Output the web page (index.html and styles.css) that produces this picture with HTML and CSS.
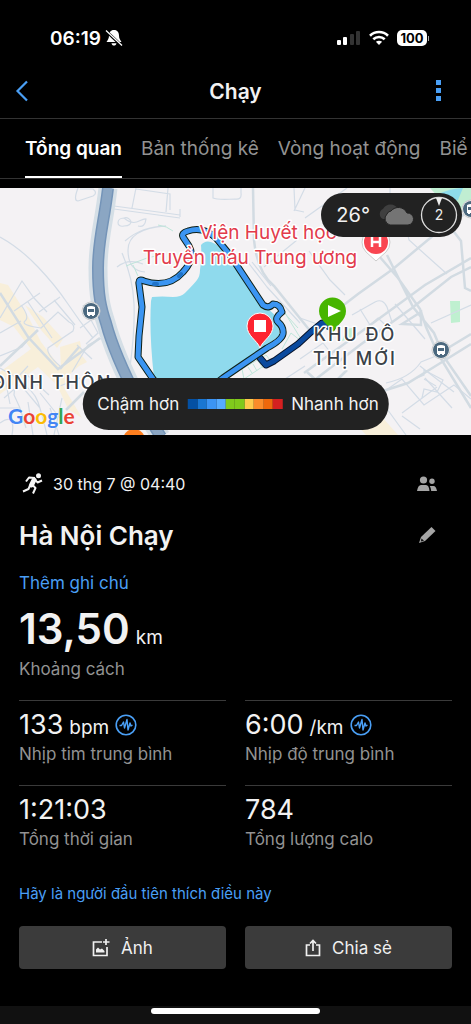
FILE: index.html
```html
<!DOCTYPE html>
<html lang="vi">
<head>
    <meta charset="UTF-8">
    <meta name="viewport" content="width=device-width, initial-scale=1.0">
    <title>Chạy</title>
    <link rel="stylesheet" href="styles.css">
</head>
<body>
    <div class="status">
        <div class="clock">
            <span>06:19</span>
            <svg width="18" height="18" viewBox="0 0 18 18">
                <path d="M9 1C5.500 1 4 3.500 4 6.500C4 10 2.500 11 1.500 13H16.500C15.500 11 14 10 14 6.500C14 3.500 12.500 1 9 1Z M6.500 14.200H11.500C11.200 15.800 10.300 16.500 9 16.500S6.800 15.800 6.500 14.200Z" fill="#fff"/>
                <path d="M1 2L17 17" stroke="#000" stroke-width="3"/>
                <path d="M1 1.500L17 16.500" stroke="#fff" stroke-width="1.300"/>
            </svg>
        </div>
        <div class="signals">
            <svg width="24" height="16" viewBox="0 0 24 16">
                <rect x="0" y="10" width="4" height="5" rx="1" fill="#fff"/>
                <rect x="6" y="7" width="4" height="8" rx="1" fill="#fff"/>
                <rect x="13" y="4" width="4" height="11" rx="1" fill="#333"/>
                <rect x="19" y="1" width="4" height="14" rx="1" fill="#333"/>
            </svg>
            <svg width="20" height="16" viewBox="0 0 20 16" fill="none" stroke="#fff" stroke-width="2.600">
                <path d="M1 5.700C6 .800 14 .800 19 5.700"/>
                <path d="M4.300 9.200C7.500 6.200 12.500 6.200 15.700 9.200"/>
                <path d="M10 15L6.900 11.800C8.700 10.300 11.300 10.300 13.100 11.800Z" fill="#fff" stroke="none"/>
            </svg>
            <div class="power">
                <span class="battery">100</span>
                <i class="nub"></i>
            </div>
        </div>
    </div>

    <header class="topbar">
        <button class="icon-btn" aria-label="Quay lại">
            <svg width="14" height="22" viewBox="0 0 14 22"><path d="M12 1.500L2.500 11L12 20.500" fill="none" stroke="#4a9ff5" stroke-width="2.200"/></svg>
        </button>
        <h1>Chạy</h1>
        <button class="icon-btn more" aria-label="Thêm">
            <svg width="14" height="22" viewBox="0 0 14 22" fill="#4a9ff5"><path d="M5 0h5v5H5zM5 8h5v5H5zM5 16h5v5H5z"/></svg>
        </button>
    </header>

    <nav class="tabs">
        <a class="active" href="#tong-quan">Tổng quan</a>
        <a href="#thong-ke">Bản thống kê</a>
        <a href="#vong">Vòng hoạt động</a>
        <a href="#bieu-do">Biể</a>
    </nav>

    <section class="map">
        <svg class="map-canvas" viewBox="0 0 471 247" preserveAspectRatio="xMidYMid slice">
            <rect width="471" height="247" fill="#f4f2f4"/>

            <!-- built up areas and parks -->
            <g fill="#f8efda">
                <path d="M0 95L8 97L29 130L41 154L60 179L79 164L87 174L79 178L70 186L63 198L82 230L68 221L57 197L38 179L0 206V184L31 161L14 139L0 132Z"/>
                <path d="M25 117L43 129L63 151L57 160L41 142Z"/>
                <path d="M60 159L80 153L82 165L61 180Z"/>
                <path d="M382 229L398 247H366L358 238Z"/>
            </g>
            <path d="M430 0H471V27Q456 22 441 12Z" fill="#c0eed2"/>
            <path d="M438 6Q452 0 463 0L458 12Q446 15 438 6Z" fill="#8edcec"/>
            <path d="M450 113H460V134L451 135Z M346 141L352 140V150L342 153Z" fill="#bff0d0"/>

            <!-- small streets -->
            <g fill="none" stroke="#d3dce6" stroke-width="1.200">
                <path d="M0 49Q20 60 38 79T68 116T93 150"/>
                <path d="M0 130L22 93L34 110L47 124M14 123L40 105M39 124L60 109M54 112L75 137M28 114L52 150M0 145L21 133"/>
                <path d="M78 0Q73 13 78 13L93 8Q98 5 93 1H80"/>
                <path d="M21 117Q30 129 25 133T41 140L58 124L69 134Q76 137 73 143L48 160Q46 166 60 178"/>
                <path d="M114 18L180 27M114 21L180 30M136 0L132 20M136 1L170 6V22M168 0L166 24M180 21V29"/>
                <path d="M124 30C116 30 116 40 124 38C135 38 131 28 124 30C136 40 140 30 146 31Q145 40 138 38"/>
                <path d="M125 53Q142 38 166 38Q128 41 128 62T145 84M117 79Q128 70 143 76M122 65Q133 90 134 116T130 179"/>
                <path d="M213 0V10Q217 12 235 11Q242 12 241 5V0M294 0L295 22L304 24M305 0L294 23"/>
                <path d="M264 79L297 52M247 73L267 99M252 74L271 98M267 99L300 135"/>
                <path d="M309 63L330 92L345 107M305 30L347 0M352 127L375 114Q383 110 387 119L392 134"/>
                <path d="M390 0V7L403 24L409 52L447 86M360 121L370 137L378 130L395 146M395 116L425 151M431 135L471 117"/>
                <path d="M300 171L323 155L338 174M318 190Q300 205 286 200L282 193L305 178M300 130L323 138"/>
                <path d="M386 195Q410 190 421 174L441 166M420 178L438 192L454 204M382 205L402 191L424 217L454 197L471 211M402 225L437 199M402 228L420 241M425 190L452 220M382 214L406 247"/>
                <path d="M417 190L424 187V182L443 192L437 204L424 201L422 210M424 191L436 198"/>
                <path d="M0 168L22 159L37 142M0 180L17 190L28 178M4 210L20 196L40 220M5 190L10 216M18 193Q34 202 38 214T47 247M25 185L49 207M16 185L14 207L20 220M55 200L80 190M0 220H20L26 240M40 205L60 230M50 220L59 247M62 210L54 247M0 235Q16 224 12 247M28 214L33 247"/>
                <path d="M72 184L88 157L104 149M77 157L92 171M83 117L98 145L86 156M80 140L101 125"/>
            </g>

            <!-- wider roads -->
            <g fill="none" stroke="#d2dbe2" stroke-width="2.500">
                <path d="M0 105L28 149L58 181L100 150M0 178L38 142M60 181L79 159M66 222L84 204"/>
                <path d="M253 0L254 52Q257 84 274 98L311 144"/>
                <path d="M471 22Q451 35 435 46L393 81L358 106L310 143"/>
                <path d="M379 68L398 90L420 121L426 139L438 166L471 220M387 67L413 119L434 145L444 169L471 208"/>
                <path d="M312 194L360 157L412 120L451 89L471 79M304 185L358 146L425 97L471 70"/>
                <path d="M451 40L461 53L465 100L471 103M443 163L471 146M383 203L408 195L434 179L471 156"/>
                <path d="M307 184L346 219M347 182L325 204M402 136L421 124V137Z"/>
            </g>

            <!-- footpaths -->
            <g fill="none" stroke="#bfe6da" stroke-width="1">
                <path d="M126 78L147 70L160 67M133 77L138 88M158 37Q167 38 173 43"/>
                <path d="M285 125L301 151M280 120L298 140M282 161L291 145L301 153L284 164M242 181L266 167L271 173L244 191Z"/>
                <path d="M248 179L252 185M253 176L257 183M258 173L263 180"/>
            </g>

            <!-- river -->
            <g fill="none">
                <path d="M108 0C104 35 98 52 98 80C98 108 101 120 106 135C112 158 124 185 139 214L161 249" stroke="#d5dfe6" stroke-width="19"/>
                <path d="M108 0C104 35 98 52 98 80C98 108 101 120 106 135C112 158 124 185 139 214L161 249" stroke="#7494b8" stroke-width="12"/>
                <path d="M108 0C104 35 98 52 98 80C98 108 101 120 106 135C112 158 124 185 139 214L161 249" stroke="#8ba6c3" stroke-width="9"/>
            </g>

            <!-- lake -->
            <path d="M152 109Q162 108 173 109Q181 109 185 105Q194 96 197 92Q200 88 200 82Q202 70 201 57Q205 52 211 54Q220 57 230 69L266 119L277 129L280 147L267 157L222 190H154Q149 145 151 113Z" fill="#8fdaed"/>

            <!-- track -->
            <g fill="none" stroke-linejoin="round" stroke-linecap="round">
                <path d="M260 170L266 177L274 173L298 156L311 144L322 135L332 140" stroke="#07132a" stroke-width="7"/>
                <path d="M260 170L266 177L274 173L298 156L311 144L322 135L332 140" stroke="#0b4a9e" stroke-width="5"/>
                <path d="M153 191L138 169L139 148L142 119L139 96Q138 90 144 93Q168 101 183 84Q196 70 189 58L183 49Q181 45 188 43Q203 38 216 50L230 67L263 117Q269 121 273 116Q280 116 282 124Q274 130 278 134Q284 139 283 146Q282 152 267 160L242 177L223 190L200 208H166Z" stroke="#0e2017" stroke-width="7"/>
                <path d="M153 191L138 169L139 148L142 119L139 96Q138 90 144 93Q168 101 183 84Q196 70 189 58L183 49Q181 45 188 43Q203 38 216 50L230 67L263 117Q269 121 273 116Q280 116 282 124Q274 130 278 134Q284 139 283 146Q282 152 267 160L242 177L223 190L200 208H166Z" stroke="#3b95f2" stroke-width="5"/>
                <path d="M191 72L189 58M154 96H157M179 88L181 86" stroke="#1f73c9" stroke-width="4"/>
            </g>

            <!-- transit stops -->
            <g transform="translate(91 123)">
                <circle r="9" fill="#fff" stroke="#ccc" stroke-width="1"/><circle r="8" fill="#4b687e"/>
                <path d="M-4-4Q0-6 4-4V4H3V5H1V4H-1V5H-3V4H-4Z" fill="#fff"/><path d="M-3-2H3V1H-3Z" fill="#4b687e"/>
            </g>
            <g transform="translate(441 162)">
                <circle r="9" fill="#fff" stroke="#ccc" stroke-width="1"/><circle r="8" fill="#4b687e"/>
                <path d="M-4-4Q0-6 4-4V4H3V5H1V4H-1V5H-3V4H-4Z" fill="#fff"/><path d="M-3-2H3V1H-3Z" fill="#4b687e"/>
            </g>
            <g transform="translate(471 21)">
                <circle r="9" fill="#fff" stroke="#ccc" stroke-width="1"/><circle r="8" fill="#4b687e"/>
                <path d="M-4-4Q0-6 4-4V4H3V5H1V4H-1V5H-3V4H-4Z" fill="#fff"/><path d="M-3-2H3V1H-3Z" fill="#4b687e"/>
            </g>
            <circle cx="134" cy="252" r="11" fill="#ff7f1f"/>

            <!-- hospital -->
            <path d="M376 73L366 64A14 14 0 1 1 386 64Z" fill="#fff" stroke="#ccc" stroke-width="1"/>
            <circle cx="376" cy="54" r="12" fill="#f94651"/>
            <path d="M372 49V59M380 49V59M372 54H380" stroke="#fff" stroke-width="2.500" fill="none"/>

            <!-- finish and start pins -->
            <path d="M260 160C257 152 247 148 247 138A13 13 0 0 1 273 138C273 148 263 152 260 160Z" fill="#fd2430" stroke="#fff" stroke-width="1"/>
            <rect x="254" y="132" width="12" height="12" fill="#fff"/>
            <path d="M333 145C330 137 319 133 319 123A13.500 13.500 0 0 1 346 123C346 133 336 137 333 145Z" fill="#47b500"/>
            <path d="M328 117L341 123L328 129Z" fill="#fff"/>

            <g class="place red">
                <text x="268" y="51" text-anchor="middle">Viện Huyết học</text>
                <text x="250" y="76" text-anchor="middle">Truyền máu Trung ương</text>
            </g>
            <g class="place area">
                <text x="355" y="153" text-anchor="middle">KHU ĐÔ</text>
                <text x="355" y="177" text-anchor="middle">THỊ MỚI</text>
                <text x="-8" y="201">ĐÌNH THÔN</text>
            </g>
        </svg>

        <div class="google"><span class="b">G</span><span class="r">o</span><span class="y">o</span><span class="b">g</span><span class="g">l</span><span class="r">e</span></div>

        <div class="weather">
            <span>26°</span>
            <svg width="38" height="22" viewBox="0 0 38 22">
                <path d="M7 15A5.500 5.500 0 0 1 7 5A8.500 8.500 0 0 1 22 5L24 12L14 15Z" fill="#3f3f3f"/>
                <path d="M14 21A6.500 6.500 0 0 1 11 10A5 5 0 0 1 15 7A9.500 9.500 0 0 1 31 9A6 6 0 0 1 32 21Z" fill="#747474" stroke="#222" stroke-width="1"/>
            </svg>
            <svg width="38" height="38" viewBox="0 0 38 38">
                <circle cx="19" cy="19" r="17.500" fill="none" stroke="#ddd" stroke-width="1.300"/>
                <path d="M16 2H22L19 10Z" fill="#eee"/>
                <text class="wind" x="19" y="24" text-anchor="middle">2</text>
            </svg>
        </div>

        <div class="legend">
            <span>Chậm hơn</span>
            <div class="scale">
                <i class="c1"></i><i class="c2"></i><i class="c3"></i><i class="c4"></i><i class="c5"></i><i class="c5"></i><i class="c6"></i><i class="c7"></i><i class="c8"></i><i class="c9"></i>
            </div>
            <span>Nhanh hơn</span>
        </div>
    </section>

    <main>
        <div class="row date">
            <svg width="22" height="22" viewBox="0 0 22 22">
                <circle cx="16.500" cy="2.800" r="2.500" fill="#f4f4f4"/>
                <path d="M12 7L9.500 12" stroke="#f4f4f4" stroke-width="5" stroke-linecap="round"/>
                <path d="M13 5L7 4.500L4 8.500M13.500 7L15.500 9.500L20 7.500M10.500 12L13.500 15L11 20.500M8 12.500L6.500 16L1 18.500" fill="none" stroke="#f4f4f4" stroke-width="2" stroke-linejoin="round"/>
            </svg>
            <span>30 thg 7 @ 04:40</span>
            <button class="icon-btn end" aria-label="Quyền riêng tư">
                <svg width="20" height="16" viewBox="0 0 20 16" fill="#a5a5a5"><circle cx="6.500" cy="4" r="3.600"/><circle cx="15" cy="5.300" r="2.700"/><path d="M0 15Q1 9 4 9H9Q12 9 12.500 15ZM12.800 10H16.500Q19 10 20 15H14.200Q14 12 12.800 10Z"/></svg>
            </button>
        </div>

        <div class="row name">
            <h2>Hà Nội Chạy</h2>
            <button class="icon-btn end" aria-label="Sửa tên">
                <svg width="20" height="18" viewBox="0 0 20 18"><path d="M14.500 1L18.500 5L8 15L2 17L4 11Z" fill="#a5a5a5"/><path d="M4.500 12.500L7 14.700L3.800 15.500Z" fill="#111"/></svg>
            </button>
        </div>

        <a class="note" href="#ghi-chu">Thêm ghi chú</a>

        <div class="distance">
            <p class="big">13,50 <small>km</small></p>
            <p class="label">Khoảng cách</p>
        </div>

        <div class="stats">
            <div class="stat">
                <p class="value">133 <small>bpm</small>
                    <svg width="22" height="22" viewBox="0 0 22 22" fill="none" stroke="#4a9ff5"><circle cx="11" cy="11" r="9.800" stroke-width="1.600"/><path d="M4.500 11.500H6.500L8.500 8L9.500 14L12 5.500L13 16L15 9L16 12L17.500 11" stroke-width="1.400" stroke-linejoin="round"/></svg>
                </p>
                <p class="label">Nhịp tim trung bình</p>
            </div>
            <div class="stat">
                <p class="value">6:00 <small>/km</small>
                    <svg width="22" height="22" viewBox="0 0 22 22" fill="none" stroke="#4a9ff5"><circle cx="11" cy="11" r="9.800" stroke-width="1.600"/><path d="M4.500 11.500H6.500L8.500 8L9.500 14L12 5.500L13 16L15 9L16 12L17.500 11" stroke-width="1.400" stroke-linejoin="round"/></svg>
                </p>
                <p class="label">Nhịp độ trung bình</p>
            </div>
            <div class="stat">
                <p class="value">1:21:03</p>
                <p class="label">Tổng thời gian</p>
            </div>
            <div class="stat">
                <p class="value">784</p>
                <p class="label">Tổng lượng calo</p>
            </div>
        </div>

        <a class="likes" href="#thich">Hãy là người đầu tiên thích điều này</a>

        <div class="actions">
            <button>
                <svg width="18" height="18" viewBox="0 0 18 18" fill="none" stroke="#f0f0f0" stroke-width="1.700"><path d="M10 3H1.500V16.500H15V8M14 0V6M11 3H17.500"/><path d="M4 13.500V10.500L6 8.500L8 10.500L10 9.500L12.500 12V13.500Z" fill="#f0f0f0" stroke="none"/></svg>
                Ảnh
            </button>
            <button>
                <svg width="16" height="18" viewBox="0 0 16 18" fill="none" stroke="#f0f0f0" stroke-width="1.700"><path d="M5 6H1.500V16.500H14.500V6H11M8 12V2M5 4.500L8 1.500L11 4.500"/></svg>
                Chia sẻ
            </button>
        </div>
    </main>

    <footer><div class="home"></div></footer>
</body>
</html>
```
FILE: styles.css
```css
*{
    box-sizing: border-box;
}
body{
    margin: 0;
    min-height: 100vh;
    display: flex;
    flex-direction: column;
    background-color: black;
    color: #f2f2f2;
    font-family: Inter, "Liberation Sans", sans-serif;
    overflow-x: hidden;
}
h1, h2, p{
    margin: 0;
}
a{
    text-decoration: none;
    color: #4a9ff5;
}
svg{
    display: block;
    flex: none;
}
button{
    font-family: inherit;
    border: none;
    cursor: pointer;
}
.icon-btn{
    background: none;
    padding: 0;
}

/* status bar */
.status{
    height: 64px;
    padding: 12px 42px 0 50px;
    display: flex;
    align-items: center;
    justify-content: space-between;
    color: white;
}
.clock, .signals, .power{
    display: flex;
    align-items: center;
}
.clock{
    font-size: 19px;
    font-weight: 600;
    gap: 4px;
}
.signals{
    gap: 8px;
}
.power{
    gap: 1px;
}
.battery{
    width: 30px;
    height: 16px;
    border-radius: 5px;
    background-color: white;
    color: black;
    font-size: 13px;
    font-weight: 700;
    line-height: 16px;
    text-align: center;
}
.nub{
    width: 1px;
    height: 5px;
    background-color: #aaa;
}

.topbar{
    height: 55px;
    padding: 0 26px 0 15px;
    display: grid;
    grid-template-columns: 1fr auto 1fr;
    align-items: center;
    border-bottom: 1px solid #333;
}
.topbar{
    padding: 0 15px;
}
.more{
    justify-self: end;
    margin-right: 11px;
}
h1{
    font-size: 21px;
    font-weight: 600;
}
.tabs{
    height: 60px;
    padding-left: 25px;
    display: flex;
    gap: 19px;
    overflow: hidden;
    border-bottom: 1px solid #333;
    margin-bottom: 9px;
}
.tabs a{
    flex: none;
    color: #929292;
    font-size: 19px;
    line-height: 59px;
    white-space: nowrap;
}
.tabs .active{
    color: white;
    font-weight: 600;
    border-bottom: 2px solid white;
}

/* map */
.map{
    position: relative;
    height: 247px;
}
.map-canvas{
    width: 100%;
    height: 100%;
}
.place{
    stroke: white;
    stroke-width: 3px;
    paint-order: stroke;
    stroke-linejoin: round;
}
.red{
    fill: #e23b4b;
    font-size: 19px;
}
.area{
    fill: #3b4248;
    font-size: 18px;
    font-weight: 500;
    letter-spacing: 2px;
}
.google{
    position: absolute;
    left: 8px;
    bottom: 6px;
    font-family: Lato, sans-serif;
    font-size: 21px;
    font-weight: 700;
    line-height: 26px;
    text-shadow: 0 0 2px white;
}
.b{ color: #4285f4; }
.r{ color: #ea4335; }
.y{ color: #fbbc05; }
.g{ color: #34a853; }
.weather{
    position: absolute;
    top: 5px;
    right: 9px;
    height: 44px;
    padding: 0 4px 0 15px;
    display: flex;
    align-items: center;
    gap: 6px;
    border-radius: 22px;
    background-color: #222;
    font-size: 20px;
}
.wind{
    fill: #eee;
    font-size: 14px;
}
.legend{
    position: absolute;
    left: 50%;
    bottom: 5px;
    transform: translateX(-50%);
    height: 52px;
    padding: 0 10px 0 15px;
    display: flex;
    align-items: center;
    gap: 9px;
    border-radius: 26px;
    background-color: #222;
    font-size: 17px;
    white-space: nowrap;
}
.scale{
    display: flex;
    width: 94px;
    height: 10px;
}
.scale i{
    flex: 1;
}
.c1{ background-color: #0450a3; }
.c2{ background-color: #1976d2; }
.c3{ background-color: #3b94f4; }
.c4{ background-color: #56abff; }
.c5{ background-color: #80c91c; }
.c6{ background-color: #ffcb4c; }
.c7{ background-color: #fb8c2a; }
.c8{ background-color: #ee680c; }
.c9{ background-color: #d42020; }

/* details */
main{
    padding: 37px 19px 0;
    flex: 1;
}
.row{
    display: flex;
    align-items: center;
}
.date{
    height: 24px;
    padding: 0 15px 0 3px;
    gap: 9px;
    font-size: 16px;
}
.end{
    margin-left: auto;
}
.name{
    height: 36px;
    margin-top: 21px;
    padding-right: 15px;
}
h2{
    font-size: 26px;
    font-weight: 600;
}
.note{
    display: block;
    margin-top: 18px;
    font-size: 17px;
    line-height: 24px;
}
.distance{
    height: 105px;
    padding-top: 8px;
}
.big, .value{
    display: flex;
    align-items: baseline;
    gap: 6px;
}
.big{
    height: 54px;
    font-size: 42px;
    font-weight: 600;
    line-height: 52px;
}
.big small{
    font-size: 19px;
    font-weight: 400;
}
.label{
    color: #929292;
    font-size: 17px;
    line-height: 24px;
}
.stats{
    display: grid;
    grid-template-columns: 1fr 1fr;
    column-gap: 19px;
}
.stat{
    height: 85px;
    padding-top: 6px;
    border-top: 1px solid #3a3a3a;
}
.value{
    height: 35px;
    font-size: 27px;
    line-height: 35px;
}
.value small{
    font-size: 19px;
    line-height: 24px;
}
.value svg{
    align-self: center;
}
.big small{
    line-height: 24px;
}
.likes{
    display: block;
    margin-top: 12px;
    font-size: 15px;
    line-height: 24px;
}
.actions{
    display: grid;
    grid-template-columns: 1fr 1fr;
    gap: 19px;
    margin-top: 20px;
}
.actions button{
    height: 43px;
    display: flex;
    align-items: center;
    justify-content: center;
    gap: 11px;
    border-radius: 4px;
    background-color: #3b3b3b;
    color: #f0f0f0;
    font-size: 17px;
}
footer{
    height: 18px;
    padding-top: 2px;
    background-color: #111;
}
.home{
    width: 36%;
    height: 6px;
    margin: 0 auto;
    border-radius: 3px;
    background-color: white;
}
```
